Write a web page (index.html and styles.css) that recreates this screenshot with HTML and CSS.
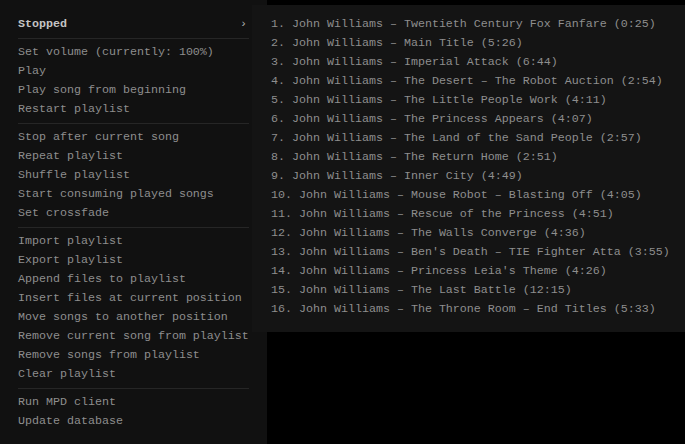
FILE: index.html
```html
<!DOCTYPE html>
<html>
<head>
<meta charset="utf-8">
<link rel="stylesheet" href="styles.css">
</head>
<body>
<div class="app">
  <nav class="menu">
    <div class="item head"><span>Stopped</span><span class="chev">›</span></div>
    <div class="sep"></div>
    <div class="item">Set volume (currently: 100%)</div>
    <div class="item">Play</div>
    <div class="item">Play song from beginning</div>
    <div class="item">Restart playlist</div>
    <div class="sep"></div>
    <div class="item">Stop after current song</div>
    <div class="item">Repeat playlist</div>
    <div class="item">Shuffle playlist</div>
    <div class="item">Start consuming played songs</div>
    <div class="item">Set crossfade</div>
    <div class="sep"></div>
    <div class="item">Import playlist</div>
    <div class="item">Export playlist</div>
    <div class="item">Append files to playlist</div>
    <div class="item">Insert files at current position</div>
    <div class="item">Move songs to another position</div>
    <div class="item">Remove current song from playlist</div>
    <div class="item">Remove songs from playlist</div>
    <div class="item">Clear playlist</div>
    <div class="sep"></div>
    <div class="item">Run MPD client</div>
    <div class="item">Update database</div>
  </nav>
  <main class="stage"></main>
  <div class="popup">
    <div class="item">1. John Williams – Twentieth Century Fox Fanfare (0:25)</div>
    <div class="item">2. John Williams – Main Title (5:26)</div>
    <div class="item">3. John Williams – Imperial Attack (6:44)</div>
    <div class="item">4. John Williams – The Desert – The Robot Auction (2:54)</div>
    <div class="item">5. John Williams – The Little People Work (4:11)</div>
    <div class="item">6. John Williams – The Princess Appears (4:07)</div>
    <div class="item">7. John Williams – The Land of the Sand People (2:57)</div>
    <div class="item">8. John Williams – The Return Home (2:51)</div>
    <div class="item">9. John Williams – Inner City (4:49)</div>
    <div class="item">10. John Williams – Mouse Robot – Blasting Off (4:05)</div>
    <div class="item">11. John Williams – Rescue of the Princess (4:51)</div>
    <div class="item">12. John Williams – The Walls Converge (4:36)</div>
    <div class="item">13. John Williams – Ben's Death – TIE Fighter Atta (3:55)</div>
    <div class="item">14. John Williams – Princess Leia's Theme (4:26)</div>
    <div class="item">15. John Williams – The Last Battle (12:15)</div>
    <div class="item">16. John Williams – The Throne Room – End Titles (5:33)</div>
  </div>
</div>
</body>
</html>
```
FILE: styles.css
```css
html, body {
  margin: 0;
  padding: 0;
  background: #000;
}
body {
  font-family: "Courier New", "Nimbus Mono PS", "Nimbus Mono L", FreeMono, Courier, "Liberation Mono", monospace;
  font-size: 11.67px;
  line-height: 19px;
  color: #8e8e8e;
}
.app {
  position: relative;
  display: flex;
  width: 685px;
  height: 444px;
  overflow: hidden;
}
.menu {
  width: 267px;
  flex: none;
  box-sizing: border-box;
  background: #111111;
  padding: 14.5px 18px 0 18px;
  display: flex;
  flex-direction: column;
}
.menu .item {
  height: 19px;
  white-space: nowrap;
}
.menu .head {
  display: flex;
  justify-content: space-between;
  color: #c4c4c4;
  font-weight: bold;
}
.chev {
  font-weight: normal;
  color: #b0b0b0;
  padding-right: 2px;
}
.sep {
  height: 1px;
  background: #262626;
  margin: 4px 0;
  width: 231px;
}
.stage {
  flex: 1;
  background: #000;
}
.popup {
  position: absolute;
  left: 252px;
  top: 5px;
  right: 0;
  height: 327px;
  box-sizing: border-box;
  background: #141414;
  padding: 9.5px 19px 0 19px;
  display: flex;
  flex-direction: column;
}
.popup .item {
  height: 19px;
  white-space: nowrap;
}
```
